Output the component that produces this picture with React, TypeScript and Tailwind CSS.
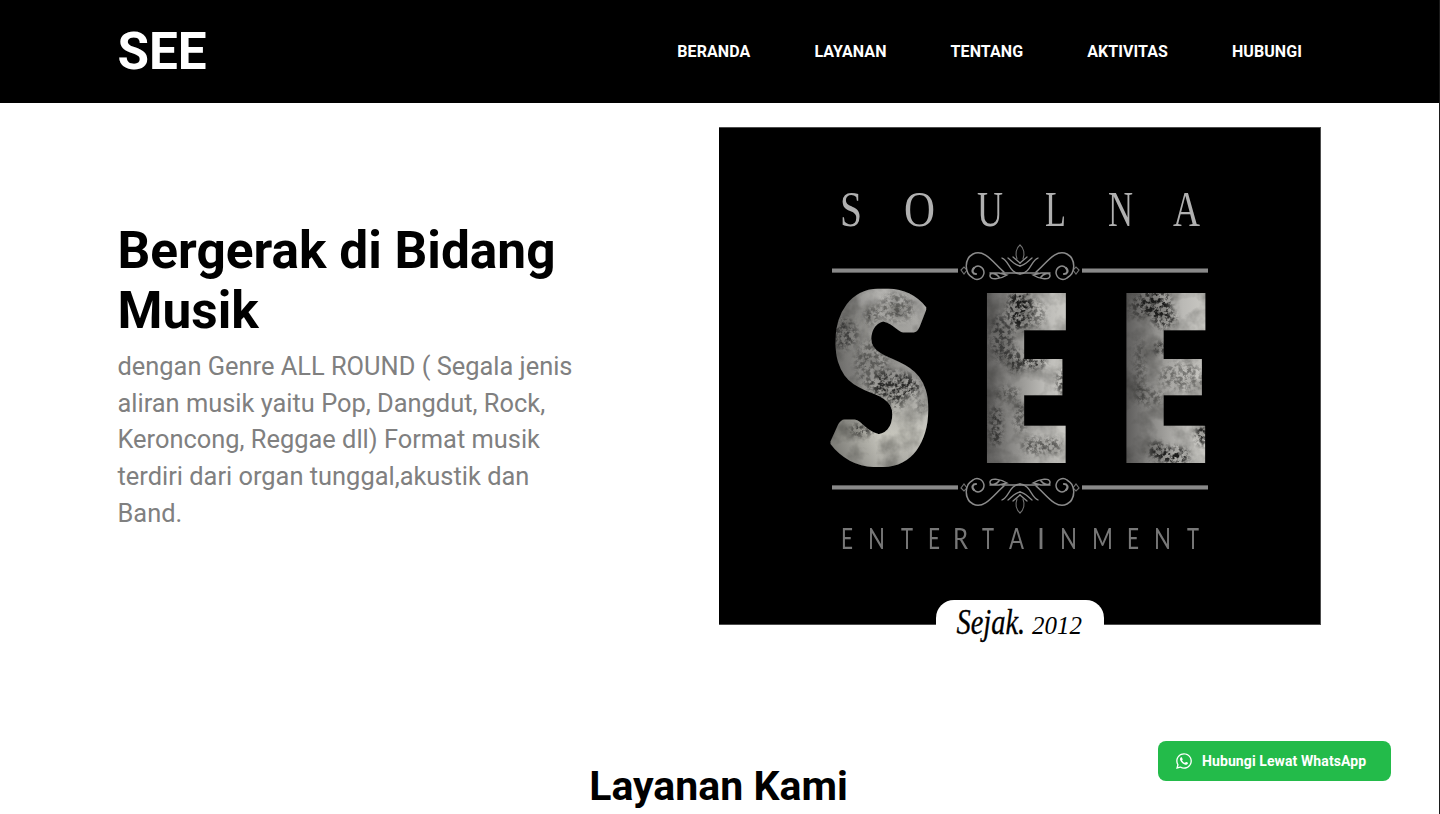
import { FaWhatsapp } from "react-icons/fa";

const links = ["BERANDA", "LAYANAN", "TENTANG", "AKTIVITAS", "HUBUNGI"];

const soulna: [string, number, number][] = [
  ["S", 840, 22], ["O", 904, 31], ["U", 977, 26], ["L", 1045, 21], ["N", 1108, 25], ["A", 1173, 27],
];

const entertainment: [string, number, number][] = [
  ["E", 841, 12], ["N", 868, 17], ["T", 901, 12], ["E", 928, 12], ["R", 953, 15], ["T", 982, 12], ["A", 1009, 15],
  ["I", 1037, 8], ["N", 1060, 17], ["M", 1092, 21], ["E", 1127, 12], ["N", 1154, 17], ["T", 1187, 12],
];

const grime: [number, number, number, number, number][] = [
  [896, 308, 18, 14, 0.4], [872, 316, 7, 9, 0.5], [844, 334, 13, 15, 0.6], [872, 364, 17, 24, 0.4],
  [894, 386, 24, 14, 0.85], [912, 388, 9, 7, 0.7], [896, 402, 9, 9, 0.5], [862, 430, 12, 6, 0.7], [920, 405, 7, 9, 0.3],
  [1002, 338, 11, 24, 0.6], [1020, 308, 12, 22, 1], [1036, 314, 10, 14, 0.4], [1016, 361, 9, 12, 0.7],
  [1034, 362, 12, 6, 1], [1062, 382, 5, 13, 0.8], [1008, 394, 12, 8, 0.4], [996, 426, 6, 20, 0.8],
  [1020, 417, 6, 16, 0.5], [1036, 446, 15, 9, 0.5], [1054, 446, 8, 8, 0.5],
  [1155, 303, 16, 14, 1], [1164, 318, 12, 10, 0.9], [1138, 307, 9, 12, 0.5], [1160, 348, 6, 6, 0.9], [1140, 370, 5, 32, 0.4],
  [1150, 397, 14, 9, 0.4], [1182, 377, 23, 14, 0.4], [1202, 434, 6, 12, 1], [1174, 456, 15, 9, 1], [1157, 451, 8, 9, 0.9],
];

function Scroll() {
  return (
    <g fill="none" stroke="#8b8b8b" strokeWidth="1.5" strokeLinecap="round">
      <path d="M974 268c4-4 10-1 10 5-1 6-7 8-11 5-9-5-9-19 0-24 12-6 22 11 31 18" />
      <path d="M974 268c-3 3-1 6 2 6" strokeWidth="2.2" />
      <path d="M990 273h9l8 2c-6 4-18 6-17 0 1-3 7-1 9 2M1002 273h18" />
      <path d="M1002 258c7 2 7 15 18 16M1008 258c5 4 7 7 12 8M1013 257l7 6" strokeWidth="1.3" />
      <path d="M1017 259c-2-5-1-11 3-14M961 270l3-3 3 3-3 4z" strokeWidth="1.1" opacity=".8" />
    </g>
  );
}

function Ornament() {
  return (
    <g>
      <path d="M832 270.5H958M1082 270.5h126" stroke="#898989" strokeWidth="4" />
      <path d="M832 272.5H958M1082 272.5h126" stroke="#595959" strokeWidth="1" />
      <Scroll />
      <g transform="translate(2040 0) scale(-1 1)"><Scroll /></g>
    </g>
  );
}

function Emblem() {
  return (
    <svg viewBox="719 127 602 498" className="block h-[498px] w-[602px]" role="img" aria-label="Soulna SEE Entertainment">
      <defs>
        <linearGradient id="s" x1="0" y1="0" x2="0" y2="1">
          <stop stopColor="#b8b7b4" /><stop offset=".25" stopColor="#a5a4a0" /><stop offset=".5" stopColor="#9b9a97" /><stop offset=".8" stopColor="#cac9c0" /><stop offset="1" stopColor="#aaa9a3" />
        </linearGradient>
        <linearGradient id="shade">
          <stop stopColor="#000" stopOpacity=".4" /><stop offset=".5" stopColor="#000" stopOpacity="0" /><stop offset="1" stopColor="#fff" stopOpacity=".15" />
        </linearGradient>
        <linearGradient id="e">
          <stop stopColor="#5c5b5a" /><stop offset=".4" stopColor="#959491" /><stop offset=".7" stopColor="#bbbab6" /><stop offset="1" stopColor="#cbcac5" />
        </linearGradient>
        <filter id="widen" filterUnits="userSpaceOnUse" x="970" y="280" width="250" height="195">
          <feMorphology operator="dilate" radius="6 0" />
        </filter>
        <filter id="thicken" filterUnits="userSpaceOnUse" x="820" y="280" width="120" height="195">
          <feMorphology operator="dilate" radius="5 1" />
        </filter>
        <filter id="soft"><feGaussianBlur stdDeviation=".6" /></filter>
        <filter id="grit" filterUnits="userSpaceOnUse" x="820" y="280" width="400" height="195" colorInterpolationFilters="sRGB">
          <feGaussianBlur in="SourceGraphic" stdDeviation="3" result="patches" />
          <feTurbulence type="fractalNoise" baseFrequency=".24" numOctaves="4" seed="8" result="noise" />
          <feColorMatrix in="noise" type="matrix" values="0 0 0 0 0  0 0 0 0 0  0 0 0 0 0  4 0 0 0 -1.6" result="specks" />
          <feComposite in="patches" in2="specks" operator="in" result="cut" />
          <feGaussianBlur in="cut" stdDeviation=".7" />
        </filter>
        <filter id="mottle" filterUnits="userSpaceOnUse" x="820" y="280" width="400" height="195" colorInterpolationFilters="sRGB">
          <feTurbulence type="fractalNoise" baseFrequency=".05" numOctaves="4" seed="3" />
          <feColorMatrix type="matrix" values="0 0 0 0 .1  0 0 0 0 .1  0 0 0 0 .09  .7 0 0 0 -.27" />
        </filter>
        <mask id="letters" maskUnits="userSpaceOnUse" x="820" y="280" width="400" height="195">
          <g fill="white" filter="url(#soft)">
            <g filter="url(#thicken)">
              <text transform="translate(833 463) scale(.735 1)" fontFamily="Lato, sans-serif" fontWeight="900" fontSize="235" stroke="white" strokeWidth="2">S</text>
            </g>
            <g fontFamily="Inter, sans-serif" fontWeight="900" fontSize="234" filter="url(#widen)">
              <text transform="translate(987 463) scale(.545 1)">E</text>
              <text transform="translate(1126.5 463) scale(.545 1)">E</text>
            </g>
          </g>
        </mask>
      </defs>
      <rect x="719" y="127" width="602" height="498" fill="#4d4d4d" />
      <rect x="719" y="128" width="601" height="496" />
      <g fill="#b0b0b0" fontFamily="Liberation Serif, serif" fontSize="50" filter="url(#soft)">
        {soulna.map(([letter, x, width]) => (
          <text key={x} x={x} y="226" textLength={width} lengthAdjust="spacingAndGlyphs">{letter}</text>
        ))}
      </g>
      <g filter="url(#soft)">
        <Ornament />
        <g transform="translate(0 758) scale(1 -1)"><Ornament /></g>
      </g>
      <g mask="url(#letters)">
        <rect x="825" y="285" width="110" height="185" fill="url(#s)" />
        <rect x="825" y="285" width="110" height="185" fill="url(#shade)" />
        <rect x="985" y="285" width="83" height="185" fill="url(#e)" />
        <rect x="1125" y="285" width="83" height="185" fill="url(#e)" />
        <rect x="820" y="280" width="400" height="195" filter="url(#mottle)" />
        <g filter="url(#grit)" fill="#1b1b1a">
          {grime.map(([x, y, rx, ry, opacity], i) => <ellipse key={i} cx={x} cy={y} rx={rx} ry={ry} opacity={opacity} />)}
        </g>
      </g>
      <g fill="#777" fontFamily="Lato, sans-serif" fontSize="29" filter="url(#soft)">
        {entertainment.map(([letter, x, width]) => (
          <text key={x} x={x} y="549" textLength={width} lengthAdjust="spacingAndGlyphs">{letter}</text>
        ))}
      </g>
    </svg>
  );
}

export default function App() {
  return (
    <div className="h-[814px] overflow-hidden border-r border-[#1b1b1b] bg-white font-['Roboto',sans-serif] text-black">
      <header className="flex h-[103px] items-center justify-between bg-black pr-[137px] pl-[117.5px] text-white">
        <a className="text-[51.2px] leading-none font-bold" href="#">SEE</a>
        <nav className="flex gap-16 text-base leading-6 font-bold tracking-[0.08px]">
          {links.map((link) => <a key={link} href="#">{link}</a>)}
        </nav>
      </header>
      <main>
        <section className="flex h-[537px] justify-between pt-6 pr-[118px] pl-[117.5px]">
          <div className="w-[480px] pt-[94px]">
            <h1 className="text-[51.4px] leading-[60px] font-bold">Bergerak di Bidang<br />Musik</h1>
            <p className="mt-[7.2px] text-[25.42px] leading-[36.6px] whitespace-nowrap text-[#808080]">
              dengan Genre ALL ROUND ( Segala jenis<br />aliran musik yaitu Pop, Dangdut, Rock,<br />Keroncong, Reggae dll) Format musik<br />terdiri dari organ tunggal,akustik dan<br />Band.
            </p>
          </div>
          <figure className="relative h-[498px] w-[602px]">
            <Emblem />
            <figcaption className="absolute top-[473px] left-[217px] h-[52px] w-[168px] rounded-t-[18px] bg-white">
              <svg className="block h-full w-full" viewBox="0 0 168 52" fontFamily="Liberation Serif, serif" fontStyle="italic">
                <text transform="translate(20.5 34) scale(.79 1)" fontSize="36" stroke="black" strokeWidth=".3">Sejak.</text>
                <text transform="translate(96 34) scale(.96 1)" fontSize="26">2012</text>
              </svg>
            </figcaption>
          </figure>
        </section>
        <h2 className="pt-[122px] pr-0.5 text-center text-[41px] leading-[49px] font-bold">Layanan Kami</h2>
      </main>
      <a href="#" className="fixed right-[49px] bottom-[33px] flex h-10 w-[233px] items-center gap-[9px] rounded-lg bg-[#23bb4a] pl-[17px] text-sm font-bold tracking-[0.1px] whitespace-nowrap text-white">
        <FaWhatsapp className="h-[18px] w-[18px] shrink-0" />Hubungi Lewat WhatsApp
      </a>
    </div>
  );
}
